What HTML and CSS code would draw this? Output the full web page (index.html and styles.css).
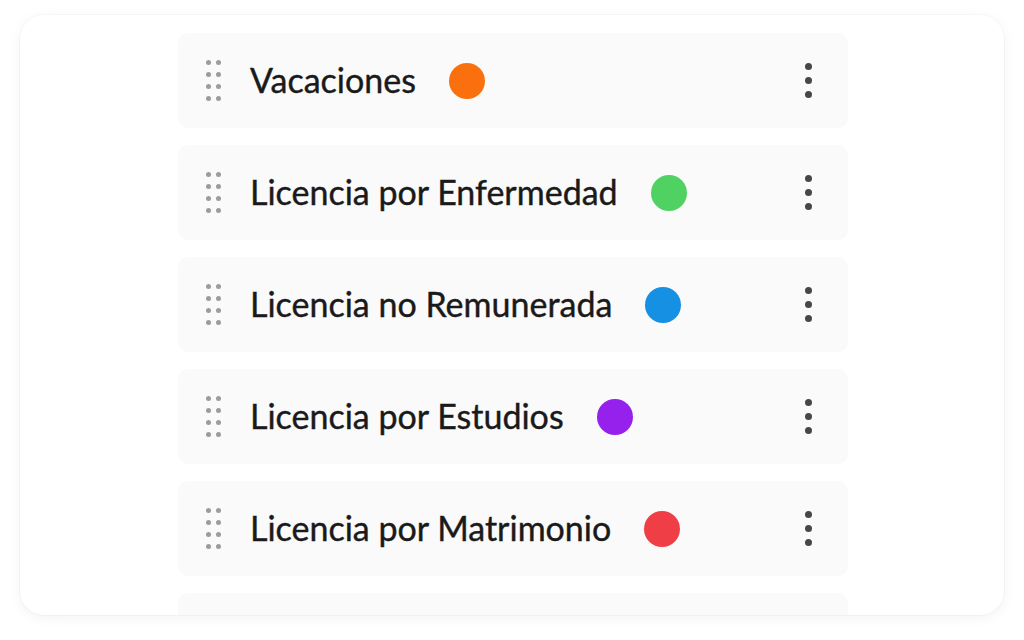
FILE: index.html
```html
<!DOCTYPE html>
<html lang="es">
<head>
<meta charset="utf-8">
<link rel="stylesheet" href="styles.css">
</head>
<body>
<div class="page">
  <div class="card">
    <ul class="list">
      <li class="row">
        <span class="grip"><i></i><i></i><i></i><i></i><i></i><i></i><i></i><i></i></span>
        <span class="label">Vacaciones</span>
        <span class="swatch orange"></span>
        <span class="kebab"><i></i><i></i><i></i></span>
      </li>
      <li class="row">
        <span class="grip"><i></i><i></i><i></i><i></i><i></i><i></i><i></i><i></i></span>
        <span class="label">Licencia por Enfermedad</span>
        <span class="swatch green"></span>
        <span class="kebab"><i></i><i></i><i></i></span>
      </li>
      <li class="row">
        <span class="grip"><i></i><i></i><i></i><i></i><i></i><i></i><i></i><i></i></span>
        <span class="label">Licencia no Remunerada</span>
        <span class="swatch blue"></span>
        <span class="kebab"><i></i><i></i><i></i></span>
      </li>
      <li class="row">
        <span class="grip"><i></i><i></i><i></i><i></i><i></i><i></i><i></i><i></i></span>
        <span class="label">Licencia por Estudios</span>
        <span class="swatch purple"></span>
        <span class="kebab"><i></i><i></i><i></i></span>
      </li>
      <li class="row">
        <span class="grip"><i></i><i></i><i></i><i></i><i></i><i></i><i></i><i></i></span>
        <span class="label">Licencia por Matrimonio</span>
        <span class="swatch red"></span>
        <span class="kebab"><i></i><i></i><i></i></span>
      </li>
      <li class="row"></li>
    </ul>
  </div>
</div>
</body>
</html>
```

FILE: styles.css
```css
* { box-sizing: border-box; }
html, body { margin: 0; padding: 0; background: #ffffff; }
body { font-family: "Lato", "Liberation Sans", sans-serif; }

.page {
  padding: 15px 20px 25px 20px;
  height: 640px;
}

.card {
  height: 600px;
  border-radius: 24px;
  background: #ffffff;
  box-shadow: 0 3px 14px rgba(0, 0, 0, 0.05), 0 0 0 1px rgba(0, 0, 0, 0.025);
  overflow: hidden;
  padding: 18px 0 0 158px;
}

.list {
  list-style: none;
  margin: 0;
  padding: 0;
  width: 670px;
  display: flex;
  flex-direction: column;
  gap: 17px;
}

.row {
  height: 95px;
  flex: 0 0 95px;
  border-radius: 10px;
  background: #fafafa;
  display: flex;
  align-items: center;
  padding: 0 0 0 28px;
}

.grip {
  display: grid;
  grid-template-columns: 5px 5px;
  column-gap: 5px;
  row-gap: 7px;
  margin-right: 29px;
}
.grip i {
  width: 5px;
  height: 5px;
  border-radius: 50%;
  background: #9c9c9c;
}

.label {
  font-size: 34px;
  font-weight: 400;
  color: #1a1a1a;
  -webkit-text-stroke: 0.4px #1a1a1a;
  line-height: 1;
  padding-bottom: 1px;
}

.swatch {
  width: 36px;
  height: 36px;
  border-radius: 50%;
  margin-left: 33px;
}
.orange { background: #fa700f; }
.green { background: #4fd262; }
.blue { background: #1590e2; }
.purple { background: #9620ec; }
.red { background: #f03e46; }

.kebab {
  margin-left: auto;
  margin-right: 36px;
  display: flex;
  flex-direction: column;
  gap: 7px;
}
.kebab i {
  width: 7px;
  height: 7px;
  border-radius: 50%;
  background: #474747;
}
```
